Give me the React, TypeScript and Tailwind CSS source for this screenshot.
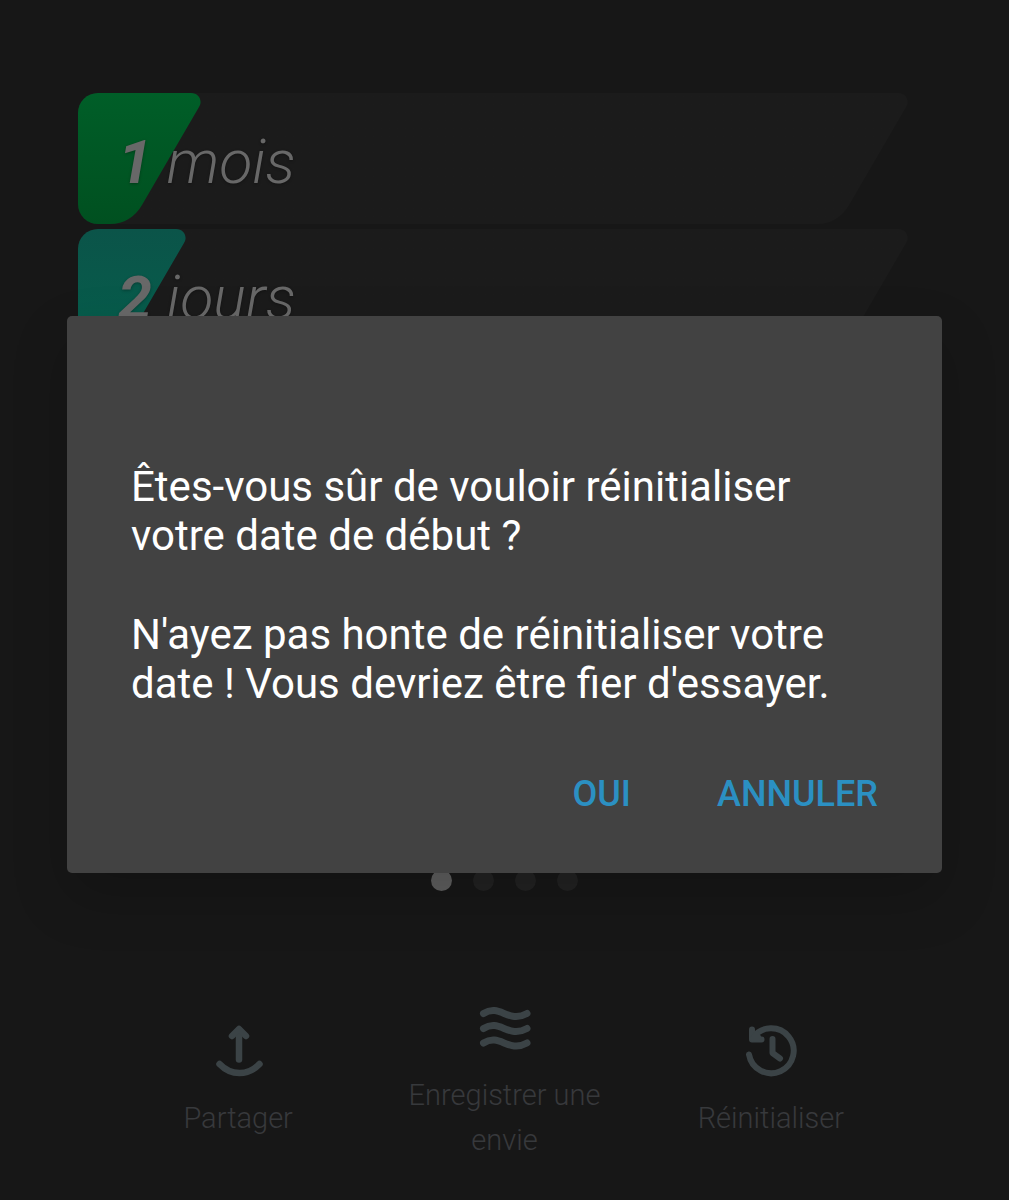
import type { ReactNode } from 'react';
import clsx from 'clsx';

const compteurs = [
  { valeur: '1', unite: 'mois', largeur: 'w-[123px]', couleur: 'from-[#005e28] to-[#005020]' },
  { valeur: '2', unite: 'jours', largeur: 'w-[108px]', couleur: 'from-[#0b5449] to-[#045f4c]' },
];

const pages = [0, 1, 2, 3];

// Bande arrondie à gauche et coupée en biais à droite
function Bande({ className, couleur }: { className: string; couleur: string }) {
  return (
    <div className={clsx('absolute inset-y-0 left-0 flex overflow-hidden rounded-l-[20px]', className)}>
      <div className={clsx('flex-1 bg-linear-to-b', couleur)} />
      <div
        className={clsx(
          "w-[91px] bg-linear-to-b [clip-path:path('M0_0H81C89_0_93_8_89_14L32_112C25_124_14_131_0_131Z')]",
          couleur
        )}
      />
    </div>
  );
}

function IconePartager() {
  return (
    <svg viewBox="0 0 60 60" className="size-[60px]" fill="none" stroke="currentColor" strokeWidth="6.5" strokeLinecap="round" strokeLinejoin="round">
      <path d="M31 38.500V9" />
      <path d="M24 15L31 8L38 15" />
      <path d="M11.500 43C23 55 40 55 51.500 43" />
    </svg>
  );
}

function IconeVagues() {
  return (
    <svg viewBox="0 0 60 60" className="size-[60px]" fill="none" stroke="currentColor" strokeWidth="7" strokeLinecap="round">
      <path d="M9.500 15.500C26 5 34 26 53 15.500" />
      <path d="M9.500 30.500C26 20 34 41 53 30.500" />
      <path d="M9.500 45C26 34.500 34 55.500 53 45" />
    </svg>
  );
}

function IconeHistorique() {
  return (
    <svg viewBox="0 0 60 60" className="size-[60px]" fill="none" stroke="currentColor" strokeWidth="6" strokeLinecap="round" strokeLinejoin="round">
      <path d="M8 33.500A22.500 22.500 0 1 0 12 16.500" />
      <path d="M11 8.500V18.500H20.500" />
      <path d="M11.500 18L15.500 13L17.500 17Z" />
      <path d="M31.500 18V32L39 37.500" />
    </svg>
  );
}

function Action({ icone, children }: { icone: ReactNode; children: ReactNode }) {
  return (
    <button type="button" className="flex flex-1 flex-col items-center gap-[15px] px-8 text-[#3b4346]">
      {icone}
      <span className="text-[29px] leading-[45px] font-light text-[#37393c]">{children}</span>
    </button>
  );
}

export default function App() {
  return (
    <div className="relative flex min-h-screen flex-col bg-[#171717] font-[Roboto,sans-serif]">
      <main className="flex flex-1 flex-col gap-[5px] pt-[93px] pr-[101px] pl-[78px]">
        {compteurs.map((c) => (
          <div key={c.unite} className="relative h-[131px]">
            <Bande className="w-full" couleur="from-[#1b1b1b] to-[#1b1b1b]" />
            <Bande className={c.largeur} couleur={c.couleur} />
            <p className="relative pt-1 pl-10 text-[61px] leading-[131px] font-light text-[#686868] italic [text-shadow:0_1px_3px_rgba(0,0,0,0.3)]">
              <span className="font-bold">{c.valeur}</span> {c.unite}
            </p>
          </div>
        ))}
      </main>

      <div className="flex justify-center gap-[21px]">
        {pages.map((p) => (
          <span key={p} className={clsx('size-[21px] rounded-full', p === 0 ? 'bg-[#5f5f5f]' : 'bg-[#222222]')} />
        ))}
      </div>

      <nav className="mt-[107px] flex items-center px-[105px] pb-[37px]">
        <Action icone={<IconePartager />}>Partager</Action>
        <Action icone={<IconeVagues />}>Enregistrer une envie</Action>
        <Action icone={<IconeHistorique />}>Réinitialiser</Action>
      </nav>

      <div className="absolute inset-0 flex items-center px-[67px] pb-[11px]">
        <div
          role="alertdialog"
          aria-modal="true"
          aria-describedby="message"
          className="w-full rounded-[5px] bg-[#424242] px-[64px] pt-[146px] pb-[54px] shadow-[0_24px_56px_rgba(0,0,0,0.18)]"
        >
          <div id="message" className="flex flex-col gap-[50px] text-[42px] leading-[49px] text-white">
            <p>Êtes-vous sûr de vouloir réinitialiser votre date de début ?</p>
            <p>N'ayez pas honte de réinitialiser votre date ! Vous devriez être fier d'essayer.</p>
          </div>
          <div className="mt-[61px] flex justify-end gap-[86px] text-[36px] leading-[50px] font-medium text-[#2b90c2]">
            <button type="button">OUI</button>
            <button type="button">ANNULER</button>
          </div>
        </div>
      </div>
    </div>
  );
}
